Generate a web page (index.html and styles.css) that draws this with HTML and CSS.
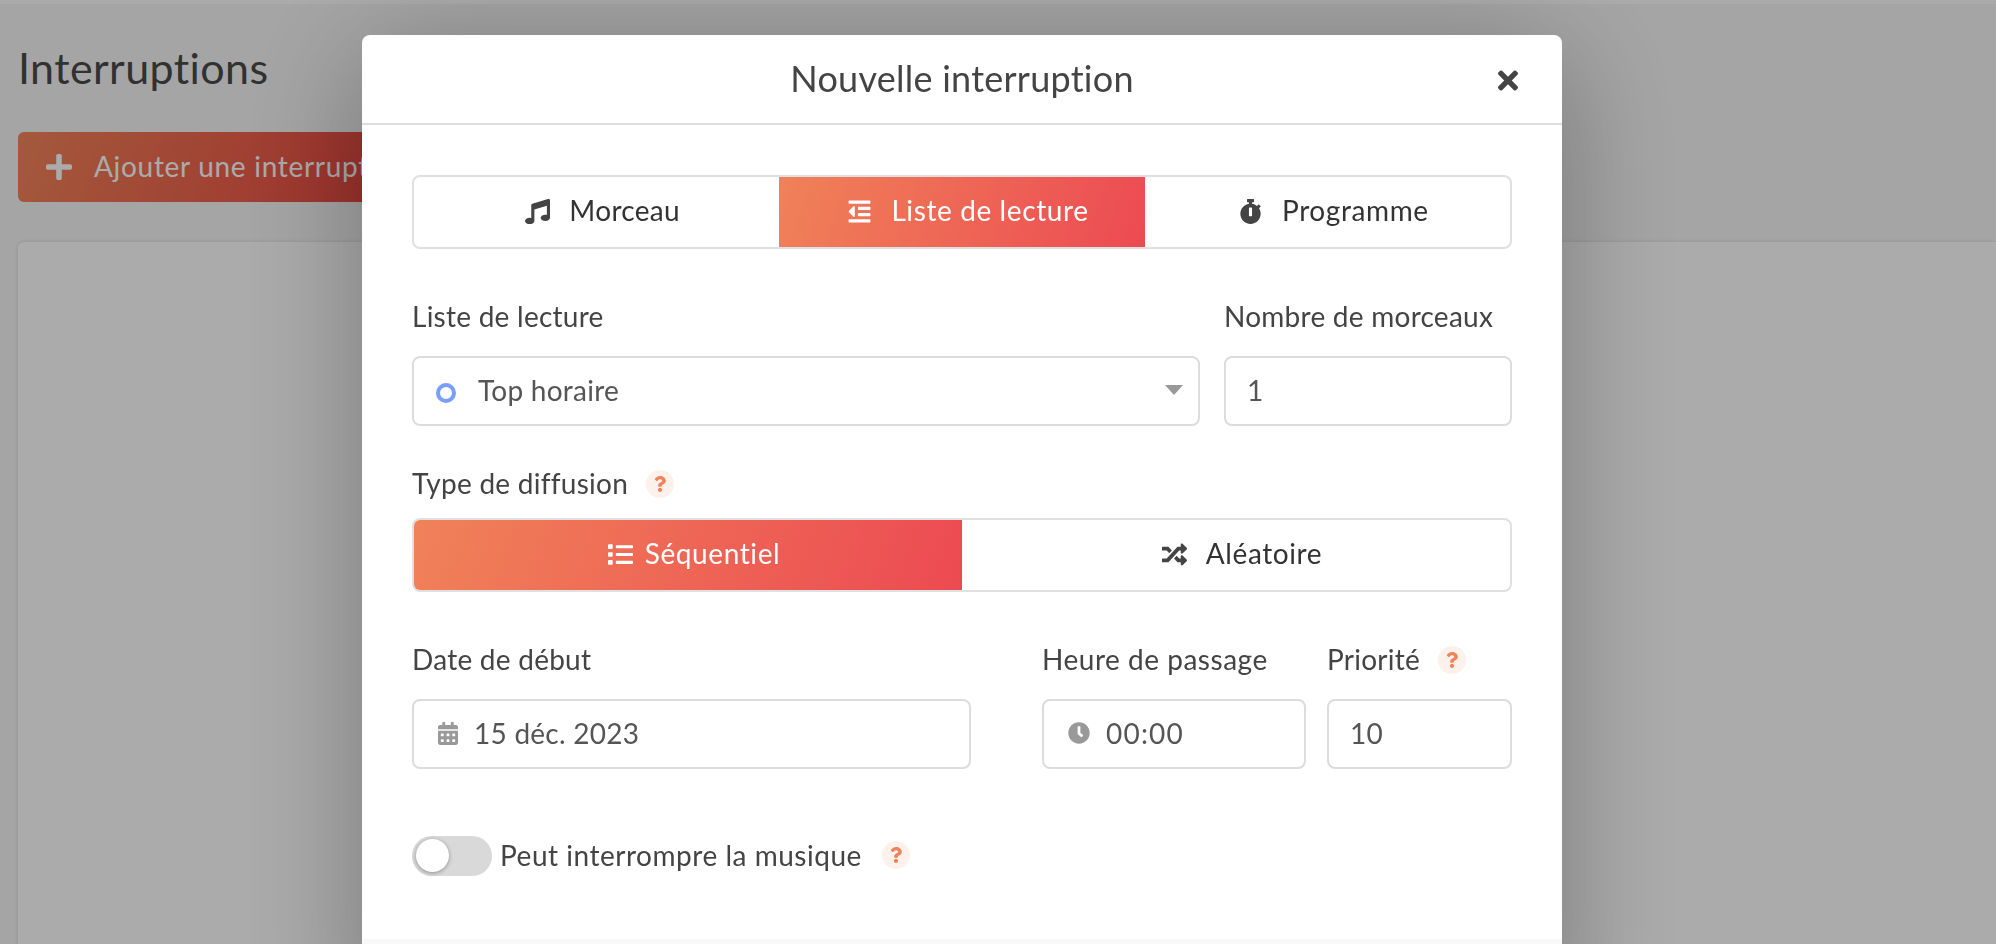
FILE: index.html
```html
<!DOCTYPE html>
<html lang="fr">
<head>
<meta charset="utf-8">
<title>Interruptions</title>
<link rel="stylesheet" href="styles.css">
</head>
<body>
<div class="topbar"></div>
<main class="page">
  <h1 class="page-title">Interruptions</h1>
  <button class="add-btn">
    <svg class="ico ico-plus" viewBox="0 0 448 512"><path d="M416 208H272V64c0-17.67-14.33-32-32-32h-32c-17.67 0-32 14.33-32 32v144H32c-17.67 0-32 14.33-32 32v32c0 17.67 14.33 32 32 32h144v144c0 17.67 14.33 32 32 32h32c17.67 0 32-14.33 32-32V304h144c17.67 0 32-14.33 32-32v-32c0-17.67-14.33-32-32-32z"/></svg>
    <span>Ajouter une interruption</span>
  </button>
  <section class="card"></section>
</main>
<div class="overlay">
  <div class="modal">
    <header class="modal-head">
      <h2 class="modal-title">Nouvelle interruption</h2>
      <svg class="ico close" viewBox="0 0 352 512"><path d="M242.72 256l100.07-100.07c12.28-12.28 12.28-32.19 0-44.48l-22.24-22.24c-12.28-12.28-32.19-12.28-44.48 0L176 189.28 75.93 89.21c-12.28-12.28-32.19-12.28-44.48 0L9.21 111.45c-12.28 12.28-12.28 32.19 0 44.48L109.28 256 9.21 356.07c-12.28 12.28-12.28 32.19 0 44.48l22.24 22.24c12.28 12.28 32.2 12.28 44.48 0L176 322.72l100.07 100.07c12.28 12.28 32.2 12.28 44.48 0l22.24-22.24c12.28-12.28 12.28-32.19 0-44.48L242.72 256z"/></svg>
    </header>
    <div class="modal-body">
      <div class="seg seg-3">
        <div class="seg-item seg-narrow">
          <svg class="ico ico-24" viewBox="0 0 512 512"><path d="M470.38 1.51L150.41 96A32 32 0 0 0 128 126.51v261.41A139 139 0 0 0 96 384c-53 0-96 28.66-96 64s43 64 96 64 96-28.66 96-64V214.32l256-75v184.61a138.4 138.4 0 0 0-32-3.93c-53 0-96 28.66-96 64s43 64 96 64 96-28.65 96-64V32a32 32 0 0 0-41.62-30.49z"/></svg>
          <span>Morceau</span>
        </div>
        <div class="seg-item active">
          <svg class="ico ico-24" viewBox="0 0 448 512"><path d="M100.69 363.29c10 10 27.31 2.93 27.31-11.31V160c0-14.32-17.33-21.31-27.31-11.31l-96 96a16 16 0 0 0 0 22.62zM432 416H16a16 16 0 0 0-16 16v32a16 16 0 0 0 16 16h416a16 16 0 0 0 16-16v-32a16 16 0 0 0-16-16zm3.17-128H204.83A12.82 12.82 0 0 0 192 300.83v38.34A12.82 12.82 0 0 0 204.83 352h230.34A12.82 12.82 0 0 0 448 339.17v-38.34A12.82 12.82 0 0 0 435.17 288zm0-128H204.83A12.82 12.82 0 0 0 192 172.83v38.34A12.82 12.82 0 0 0 204.83 224h230.34A12.82 12.82 0 0 0 448 211.17v-38.34A12.82 12.82 0 0 0 435.17 160zM432 32H16A16 16 0 0 0 0 48v32a16 16 0 0 0 16 16h416a16 16 0 0 0 16-16V48a16 16 0 0 0-16-16z"/></svg>
          <span>Liste de lecture</span>
        </div>
        <div class="seg-item">
          <svg class="ico ico-24" viewBox="0 0 448 512"><path d="M432 304c0 114.9-93.1 208-208 208S16 418.9 16 304c0-104 76.3-190.2 176-205.5V64h-28c-6.6 0-12-5.4-12-12V12c0-6.6 5.4-12 12-12h120c6.6 0 12 5.4 12 12v40c0 6.6-5.4 12-12 12h-28v34.5c37.5 5.8 71.7 21.6 99.7 44.6l27.5-27.5c4.7-4.7 12.3-4.7 17 0l28.3 28.3c4.7 4.7 4.7 12.3 0 17l-29.4 29.4-.6.6C419.7 223.3 432 262.2 432 304zm-176 36V188.5c0-6.6-5.4-12-12-12h-40c-6.6 0-12 5.4-12 12V340c0 6.6 5.4 12 12 12h40c6.6 0 12-5.4 12-12z"/></svg>
          <span>Programme</span>
        </div>
      </div>

      <div class="row row-list">
        <div class="group">
          <label class="label">Liste de lecture</label>
          <div class="field field-select">
            <span class="dot"></span>
            <span class="value value-select">Top horaire</span>
            <span class="caret"></span>
          </div>
        </div>
        <div class="group">
          <label class="label">Nombre de morceaux</label>
          <div class="field"><span class="value">1</span></div>
        </div>
      </div>

      <div class="group group-diffusion">
        <label class="label">Type de diffusion
          <span class="help"><svg class="ico" viewBox="0 0 384 512"><path d="M202.021 0C122.202 0 70.503 32.703 29.914 91.026c-7.363 10.58-5.093 25.086 5.178 32.874l43.138 32.709c10.373 7.865 25.132 6.026 33.253-4.148 25.049-31.381 43.63-49.449 82.757-49.449 30.764 0 68.816 19.799 68.816 49.631 0 22.552-18.617 34.134-48.993 51.164-35.423 19.86-82.299 44.576-82.299 106.405V320c0 13.255 10.745 24 24 24h72.471c13.255 0 24-10.745 24-24v-5.773c0-42.86 125.268-44.645 125.268-160.627C377.504 66.256 286.902 0 202.021 0zM192 373.459c-38.196 0-69.271 31.075-69.271 69.271 0 38.195 31.075 69.27 69.271 69.27s69.271-31.075 69.271-69.271-31.075-69.27-69.271-69.27z"/></svg></span>
        </label>
        <div class="seg seg-2">
          <div class="seg-item active seg-tight">
            <svg class="ico ico-24" viewBox="0 0 512 512"><path d="M80 368H16a16 16 0 0 0-16 16v64a16 16 0 0 0 16 16h64a16 16 0 0 0 16-16v-64a16 16 0 0 0-16-16zm0-320H16A16 16 0 0 0 0 64v64a16 16 0 0 0 16 16h64a16 16 0 0 0 16-16V64a16 16 0 0 0-16-16zm0 160H16a16 16 0 0 0-16 16v64a16 16 0 0 0 16 16h64a16 16 0 0 0 16-16v-64a16 16 0 0 0-16-16zm416 176H176a16 16 0 0 0-16 16v32a16 16 0 0 0 16 16h320a16 16 0 0 0 16-16v-32a16 16 0 0 0-16-16zm0-320H176a16 16 0 0 0-16 16v32a16 16 0 0 0 16 16h320a16 16 0 0 0 16-16V80a16 16 0 0 0-16-16zm0 160H176a16 16 0 0 0-16 16v32a16 16 0 0 0 16 16h320a16 16 0 0 0 16-16v-32a16 16 0 0 0-16-16z"/></svg>
            <span>Séquentiel</span>
          </div>
          <div class="seg-item">
            <svg class="ico ico-24" viewBox="0 0 512 512"><path d="M504.971 359.029c9.373 9.373 9.373 24.569 0 33.941l-80 79.984c-15.01 15.01-40.971 4.49-40.971-16.971V416h-58.785a12.004 12.004 0 0 1-8.773-3.812l-70.556-75.596 53.333-57.143L352 336h32v-39.981c0-21.438 25.943-31.998 40.971-16.971l80 79.981zM12 176h84l52.781 56.551 53.333-57.143-70.556-75.596A11.999 11.999 0 0 0 122.785 96H12c-6.627 0-12 5.373-12 12v56c0 6.627 5.373 12 12 12zm372 0v39.984c0 21.46 25.961 31.98 40.971 16.971l80-79.984c9.373-9.373 9.373-24.569 0-33.941l-80-79.981C409.943 24.021 384 34.582 384 56.019V96h-58.785a12.004 12.004 0 0 0-8.773 3.812L96 336H12c-6.627 0-12 5.373-12 12v56c0 6.627 5.373 12 12 12h110.785c3.326 0 6.503-1.381 8.773-3.812L352 176h32z"/></svg>
            <span>Aléatoire</span>
          </div>
        </div>
      </div>

      <div class="row row-date">
        <div class="group group-date">
          <label class="label">Date de début</label>
          <div class="field field-date">
            <svg class="ico ico-field ico-cal" viewBox="0 0 448 512"><path d="M0 464c0 26.5 21.5 48 48 48h352c26.5 0 48-21.5 48-48V192H0v272zm320-196c0-6.6 5.4-12 12-12h40c6.6 0 12 5.4 12 12v40c0 6.6-5.4 12-12 12h-40c-6.6 0-12-5.4-12-12v-40zm0 128c0-6.6 5.4-12 12-12h40c6.6 0 12 5.4 12 12v40c0 6.6-5.4 12-12 12h-40c-6.6 0-12-5.4-12-12v-40zM192 268c0-6.6 5.4-12 12-12h40c6.6 0 12 5.4 12 12v40c0 6.6-5.4 12-12 12h-40c-6.6 0-12-5.4-12-12v-40zm0 128c0-6.6 5.4-12 12-12h40c6.6 0 12 5.4 12 12v40c0 6.6-5.4 12-12 12h-40c-6.6 0-12-5.4-12-12v-40zM64 268c0-6.6 5.4-12 12-12h40c6.6 0 12 5.4 12 12v40c0 6.6-5.4 12-12 12H76c-6.6 0-12-5.4-12-12v-40zm0 128c0-6.6 5.4-12 12-12h40c6.6 0 12 5.4 12 12v40c0 6.6-5.4 12-12 12H76c-6.6 0-12-5.4-12-12v-40zM400 64h-48V16c0-8.8-7.2-16-16-16h-32c-8.8 0-16 7.2-16 16v48H160V16c0-8.8-7.2-16-16-16h-32c-8.8 0-16 7.2-16 16v48H48C21.5 64 0 85.5 0 112v48h448v-48c0-26.5-21.5-48-48-48z"/></svg>
            <span class="value">15 déc. 2023</span>
          </div>
        </div>
        <div class="group">
          <label class="label label-wide">Heure de passage</label>
          <div class="field field-time">
            <svg class="ico ico-field ico-clock" viewBox="0 0 512 512"><path d="M256,8C119,8,8,119,8,256S119,504,256,504,504,393,504,256,393,8,256,8Zm92.49,313h0l-20,25a16,16,0,0,1-22.49,2.5h0l-67-49.72a40,40,0,0,1-15-31.23V112a16,16,0,0,1,16-16h32a16,16,0,0,1,16,16V256l58,42.5A16,16,0,0,1,348.49,321Z"/></svg>
            <span class="value value-time">00:00</span>
          </div>
        </div>
        <div class="group">
          <label class="label">Priorité
            <span class="help"><svg class="ico" viewBox="0 0 384 512"><path d="M202.021 0C122.202 0 70.503 32.703 29.914 91.026c-7.363 10.58-5.093 25.086 5.178 32.874l43.138 32.709c10.373 7.865 25.132 6.026 33.253-4.148 25.049-31.381 43.63-49.449 82.757-49.449 30.764 0 68.816 19.799 68.816 49.631 0 22.552-18.617 34.134-48.993 51.164-35.423 19.86-82.299 44.576-82.299 106.405V320c0 13.255 10.745 24 24 24h72.471c13.255 0 24-10.745 24-24v-5.773c0-42.86 125.268-44.645 125.268-160.627C377.504 66.256 286.902 0 202.021 0zM192 373.459c-38.196 0-69.271 31.075-69.271 69.271 0 38.195 31.075 69.27 69.271 69.27s69.271-31.075 69.271-69.271-31.075-69.27-69.271-69.27z"/></svg></span>
          </label>
          <div class="field"><span class="value">10</span></div>
        </div>
      </div>

      <div class="toggle-row">
        <span class="toggle"><span class="knob"></span></span>
        <span class="label label-wide toggle-label">Peut interrompre la musique</span>
        <span class="help help-toggle"><svg class="ico" viewBox="0 0 384 512"><path d="M202.021 0C122.202 0 70.503 32.703 29.914 91.026c-7.363 10.58-5.093 25.086 5.178 32.874l43.138 32.709c10.373 7.865 25.132 6.026 33.253-4.148 25.049-31.381 43.63-49.449 82.757-49.449 30.764 0 68.816 19.799 68.816 49.631 0 22.552-18.617 34.134-48.993 51.164-35.423 19.86-82.299 44.576-82.299 106.405V320c0 13.255 10.745 24 24 24h72.471c13.255 0 24-10.745 24-24v-5.773c0-42.86 125.268-44.645 125.268-160.627C377.504 66.256 286.902 0 202.021 0zM192 373.459c-38.196 0-69.271 31.075-69.271 69.271 0 38.195 31.075 69.27 69.271 69.27s69.271-31.075 69.271-69.271-31.075-69.27-69.271-69.27z"/></svg></span>
      </div>
    </div>
    <footer class="modal-foot"></footer>
  </div>
</div>
</body>
</html>
```
FILE: styles.css
```css
* { box-sizing: border-box; }
html, body { margin: 0; height: 100%; overflow: hidden; }
body {
  background: #f6f6f6;
  font-family: "Lato", "Open Sans", sans-serif;
  font-variant-ligatures: none;
  letter-spacing: .25px;
  color: #444;
}
.ico { display: block; fill: currentColor; flex: none; }
.topbar { height: 4px; background: #fff; }

.page { padding-left: 18px; }
.page-title {
  margin: 0;
  padding-top: 40px;
  height: 128px;
  font-size: 43px;
  line-height: 48px;
  font-weight: 400;
  letter-spacing: .4px;
  color: #4a4a4a;
}
.add-btn {
  display: flex;
  align-items: center;
  gap: 22px;
  height: 70px;
  width: 420px;
  padding: 0 28px;
  border: 0;
  border-radius: 6px;
  background: linear-gradient(110deg, #f5865a, #ea3f3f);
  color: #fff;
  font: 400 28px "Lato", sans-serif;
  letter-spacing: .7px;
}
.add-btn span { padding-bottom: 2px; }
.ico-plus { width: 26px; height: 30px; }
.card {
  margin-top: 40px;
  height: 720px;
  background: #fff;
  border-radius: 6px 0 0 6px;
  box-shadow: 0 0 4px rgba(0, 0, 0, .12);
}

.overlay {
  position: fixed;
  inset: 0;
  background: rgba(0, 0, 0, .33);
  display: flex;
  align-items: flex-start;
  padding: 35px 0 0 362px;
}
.modal {
  width: 1200px;
  flex: none;
  background: #fff;
  border-radius: 8px;
  box-shadow: 0 20px 120px rgba(0, 0, 0, .3);
}
.modal-head {
  position: relative;
  height: 90px;
  border-bottom: 2px solid #dedede;
  display: flex;
  align-items: center;
  justify-content: center;
}
.modal-title {
  margin: 0;
  font-size: 36px;
  font-weight: 400;
  color: #444;
  position: relative;
  top: -1px;
}
.close {
  position: absolute;
  right: 44px;
  top: 31px;
  width: 20px;
  height: 29px;
  color: #444;
}
.modal-body { padding: 50px 50px 0; height: 814px; }

.seg {
  display: grid;
  height: 74px;
  border: 2px solid #e0e0e0;
  border-radius: 8px;
  overflow: hidden;
}
.seg-3 { grid-template-columns: repeat(3, 1fr); }
.seg-2 { grid-template-columns: repeat(2, 1fr); }
.seg-item {
  display: flex;
  align-items: center;
  justify-content: center;
  gap: 19px;
  font-size: 28px;
  letter-spacing: .6px;
  color: #333;
  padding: 0 0 5px 12px;
}
.seg-item .ico { color: #444; }
.seg-narrow { letter-spacing: .3px; }
.seg-tight { gap: 12px; }
.seg-item.active {
  background: linear-gradient(110deg, #f08259, #ec4a52);
  color: #fff;
}
.seg-item.active .ico { color: #fff; }
.ico-24 { width: 25px; height: 25px; margin-top: 4px; }

.row { display: grid; }
.row-list {
  grid-template-columns: 788px 288px;
  column-gap: 24px;
  margin-top: 50px;
}
.row-date {
  grid-template-columns: 609px 264px 185px;
  column-gap: 21px;
  margin-top: 50px;
}
.group-date { padding-right: 50px; }

.label {
  display: flex;
  align-items: center;
  height: 36px;
  padding-bottom: 2px;
  font-size: 28px;
  line-height: 34px;
  color: #444;
  white-space: nowrap;
}
.label-wide { letter-spacing: .52px; }
.group .label + * { margin-top: 21px; }
.group-diffusion { margin-top: 40px; }
.group-diffusion .label + * { margin-top: 16px; }

.field {
  display: flex;
  align-items: center;
  height: 70px;
  border: 2px solid #dcdcdc;
  border-radius: 8px;
  padding: 0 21px 2px;
  background: #fff;
}
.value { font-size: 28px; color: #555; }
.value-time { letter-spacing: 1.2px; }
.field-select { padding: 0 15px 2px 22px; }
.dot {
  width: 20px;
  height: 20px;
  border: 4px solid #7a9ffa;
  border-radius: 50%;
  margin-top: 6px;
  flex: none;
}
.value-select { margin-left: 22px; flex: 1; }
.caret {
  width: 0;
  height: 0;
  border-left: 9px solid transparent;
  border-right: 9px solid transparent;
  border-top: 10px solid #999;
}
.ico-field { color: #999; }
.ico-cal { width: 20px; height: 23px; margin-right: 16px; }
.ico-clock { width: 22px; height: 22px; margin-right: 16px; }
.field-date { padding-left: 24px; }
.field-time { padding-left: 24px; }

.help {
  display: inline-flex;
  align-items: center;
  justify-content: center;
  width: 28px;
  height: 28px;
  border-radius: 50%;
  background: #fdf1ec;
  color: #f1835a;
  margin-left: 20px;
  flex: none;
}
.label .help { margin-top: 2px; margin-left: 18px; }
.help .ico { width: 12px; height: 16px; }
.help-toggle { margin-top: -3px; }

.toggle-row {
  display: flex;
  align-items: center;
  margin-top: 67px;
}
.toggle {
  display: block;
  width: 80px;
  height: 40px;
  border-radius: 20px;
  background: #d9d9d9;
  padding: 3px 4px;
  flex: none;
}
.knob {
  display: block;
  width: 33px;
  height: 33px;
  border-radius: 50%;
  background: #fff;
  box-shadow: 0 1px 4px rgba(0, 0, 0, .35);
}
.toggle-label { margin-left: 8px; }

.modal-foot { height: 80px; background: #f8f8f8; }
```
